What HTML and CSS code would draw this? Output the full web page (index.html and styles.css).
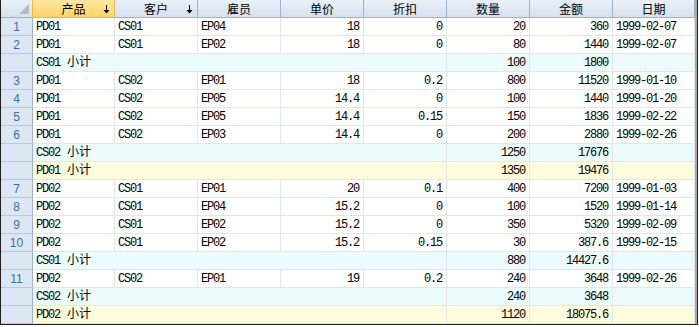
FILE: index.html
```html
<!DOCTYPE html>
<html>
<head>
<meta charset="utf-8">
<link rel="stylesheet" href="styles.css">
</head>
<body>
<div class="grid">
  <div class="row head">
    <div class="c corner"><span class="tri"></span></div>
    <div class="c h active">产品<svg class="arr" width="7" height="9" viewBox="0 0 7 9"><path d="M3.5 0V8" stroke="#000" stroke-width="1"/><path d="M0.5 5L3.5 8.5L6.5 5Z" fill="#000"/></svg></div>
    <div class="c h">客户<svg class="arr" width="7" height="9" viewBox="0 0 7 9"><path d="M3.5 0V8" stroke="#000" stroke-width="1"/><path d="M0.5 5L3.5 8.5L6.5 5Z" fill="#000"/></svg></div>
    <div class="c h">雇员</div>
    <div class="c h">单价</div>
    <div class="c h">折扣</div>
    <div class="c h">数量</div>
    <div class="c h">金额</div>
    <div class="c h">日期</div>
  </div>

  <div class="row"><div class="c n">1</div><div class="c t">PD01</div><div class="c t">CS01</div><div class="c t">EP04</div><div class="c r">18</div><div class="c r">0</div><div class="c r">20</div><div class="c r">360</div><div class="c t">1999-02-07</div></div>
  <div class="row"><div class="c n">2</div><div class="c t">PD01</div><div class="c t">CS01</div><div class="c t">EP02</div><div class="c r">18</div><div class="c r">0</div><div class="c r">80</div><div class="c r">1440</div><div class="c t">1999-02-07</div></div>
  <div class="row sub cs"><div class="c n"></div><div class="c t span">CS01 <span class="cjk">小计</span></div><div class="c r">100</div><div class="c r">1800</div><div class="c t"></div></div>
  <div class="row"><div class="c n">3</div><div class="c t">PD01</div><div class="c t">CS02</div><div class="c t">EP01</div><div class="c r">18</div><div class="c r">0.2</div><div class="c r">800</div><div class="c r">11520</div><div class="c t">1999-01-10</div></div>
  <div class="row"><div class="c n">4</div><div class="c t">PD01</div><div class="c t">CS02</div><div class="c t">EP05</div><div class="c r">14.4</div><div class="c r">0</div><div class="c r">100</div><div class="c r">1440</div><div class="c t">1999-01-20</div></div>
  <div class="row"><div class="c n">5</div><div class="c t">PD01</div><div class="c t">CS02</div><div class="c t">EP05</div><div class="c r">14.4</div><div class="c r">0.15</div><div class="c r">150</div><div class="c r">1836</div><div class="c t">1999-02-22</div></div>
  <div class="row"><div class="c n">6</div><div class="c t">PD01</div><div class="c t">CS02</div><div class="c t">EP03</div><div class="c r">14.4</div><div class="c r">0</div><div class="c r">200</div><div class="c r">2880</div><div class="c t">1999-02-26</div></div>
  <div class="row sub cs"><div class="c n"></div><div class="c t span">CS02 <span class="cjk">小计</span></div><div class="c r">1250</div><div class="c r">17676</div><div class="c t"></div></div>
  <div class="row sub pd"><div class="c n"></div><div class="c t span">PD01 <span class="cjk">小计</span></div><div class="c r">1350</div><div class="c r">19476</div><div class="c t"></div></div>
  <div class="row"><div class="c n">7</div><div class="c t">PD02</div><div class="c t">CS01</div><div class="c t">EP01</div><div class="c r">20</div><div class="c r">0.1</div><div class="c r">400</div><div class="c r">7200</div><div class="c t">1999-01-03</div></div>
  <div class="row"><div class="c n">8</div><div class="c t">PD02</div><div class="c t">CS01</div><div class="c t">EP04</div><div class="c r">15.2</div><div class="c r">0</div><div class="c r">100</div><div class="c r">1520</div><div class="c t">1999-01-14</div></div>
  <div class="row"><div class="c n">9</div><div class="c t">PD02</div><div class="c t">CS01</div><div class="c t">EP02</div><div class="c r">15.2</div><div class="c r">0</div><div class="c r">350</div><div class="c r">5320</div><div class="c t">1999-02-09</div></div>
  <div class="row"><div class="c n">10</div><div class="c t">PD02</div><div class="c t">CS01</div><div class="c t">EP02</div><div class="c r">15.2</div><div class="c r">0.15</div><div class="c r">30</div><div class="c r">387.6</div><div class="c t">1999-02-15</div></div>
  <div class="row sub cs"><div class="c n"></div><div class="c t span">CS01 <span class="cjk">小计</span></div><div class="c r">880</div><div class="c r">14427.6</div><div class="c t"></div></div>
  <div class="row"><div class="c n">11</div><div class="c t">PD02</div><div class="c t">CS02</div><div class="c t">EP01</div><div class="c r">19</div><div class="c r">0.2</div><div class="c r">240</div><div class="c r">3648</div><div class="c t">1999-02-26</div></div>
  <div class="row sub cs"><div class="c n"></div><div class="c t span">CS02 <span class="cjk">小计</span></div><div class="c r">240</div><div class="c r">3648</div><div class="c t"></div></div>
  <div class="row sub pd"><div class="c n"></div><div class="c t span">PD02 <span class="cjk">小计</span></div><div class="c r">1120</div><div class="c r">18075.6</div><div class="c t"></div></div>
</div>
</body>
</html>
```

FILE: styles.css
```css
html, body {
  margin: 0;
  padding: 0;
  background: #ffffff;
}
.grid {
  width: 698px;
  box-sizing: border-box;
  border-left: 1px solid #1e1e1e;
  border-right: 1px solid #1e1e1e;
  border-bottom: 1px solid #1e1e1e;
  background: #ffffff;
  font-family: "Liberation Mono", "Noto Sans CJK SC", monospace;
  font-size: 12px;
  color: #000;
}
.row {
  display: grid;
  grid-template-columns: 32px 82px 83px 83px 83px 83px 83px 83px 82px 2px;
  height: 18px;
}
.row::after {
  content: "";
  background: #a7abb0;
}
.c {
  box-sizing: border-box;
  height: 18px;
  padding-top: 1px;
  line-height: 16px;
  border-right: 1px solid #e2e5ea;
  border-bottom: 1px solid #e2e5ea;
  white-space: nowrap;
  letter-spacing: -1.2px;
}
.t {
  padding-left: 3px;
}
.r {
  text-align: right;
  padding-right: 4px;
}
.cjk {
  font-family: "Noto Sans CJK SC", sans-serif;
  letter-spacing: 0;
  margin-left: 1px;
  line-height: 10px;
}
.n {
  background: #dde7f3;
  border-right: 1px solid #9fb4cc;
  border-bottom: 1px solid #b9c9dc;
  color: #3c6ea8;
  text-align: center;
  font-family: "Liberation Sans", sans-serif;
  letter-spacing: 0;
  font-size: 12px;
}
.head .c {
  background: linear-gradient(#eaf0f8, #d6e1f0);
  border-right: 1px solid #9fb4cc;
  border-bottom: 1px solid #9fb4cc;
  padding-top: 0;
}
.head .h {
  position: relative;
  text-align: center;
  font-family: "Noto Sans CJK SC", sans-serif;
  letter-spacing: 0;
  font-size: 12px;
  line-height: 17px;
}
.head .active {
  background: linear-gradient(#fde7a3, #fbd466);
  border-left: 1px solid #f2b54a;
  border-right: 1px solid #f2b54a;
  border-bottom: 1px solid #f2b54a;
  margin-left: -1px;
  width: calc(100% + 1px);
}
.arr {
  position: absolute;
  right: 4px;
  top: 5px;
}
.corner {
  position: relative;
}
.tri {
  position: absolute;
  right: 3px;
  bottom: 3px;
  width: 0;
  height: 0;
  border-left: 10px solid transparent;
  border-bottom: 10px solid #b3bcc7;
}
.span {
  grid-column: span 5;
}
.sub.cs .c:not(.n) {
  background: #ebfbfe;
}
.sub.pd .c:not(.n) {
  background: #fffbdd;
}
```
